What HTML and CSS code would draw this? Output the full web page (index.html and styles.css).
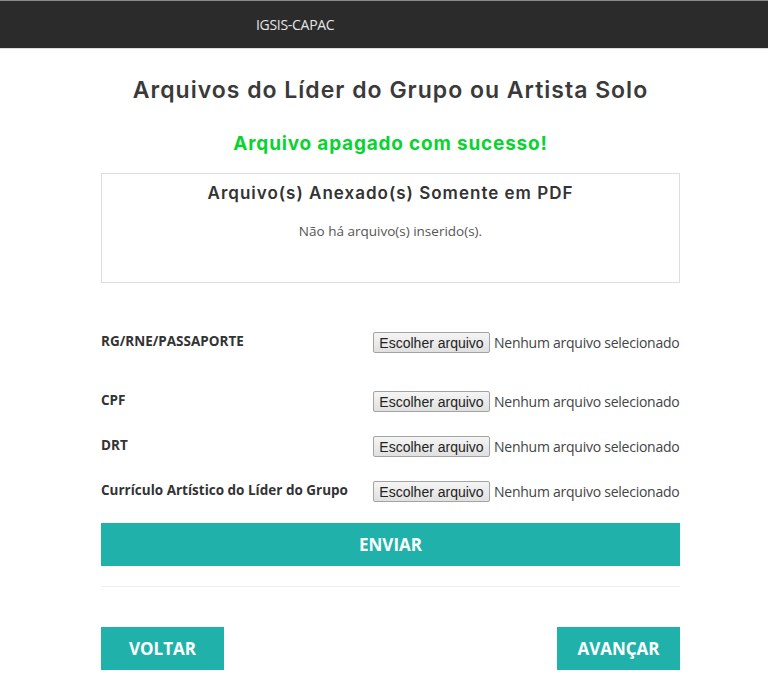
FILE: index.html
```html
<!DOCTYPE html>
<html lang="pt-BR">
<head>
<meta charset="utf-8">
<title>IGSIS-CAPAC</title>
<link rel="stylesheet" href="styles.css">
</head>
<body>
<header class="navbar">
  <span class="brand">IGSIS-CAPAC</span>
</header>
<main class="container">
  <h1 class="title">Arquivos do Líder do Grupo ou Artista Solo</h1>
  <p class="success">Arquivo apagado com sucesso!</p>
  <section class="attached">
    <h2 class="attached-title">Arquivo(s) Anexado(s) Somente em PDF</h2>
    <p class="attached-empty">Não há arquivo(s) inserido(s).</p>
  </section>
  <form class="upload">
    <div class="row row-first">
      <span class="label">RG/RNE/PASSAPORTE</span>
      <div class="file"><label class="file-btn">Escolher arquivo<input type="file" hidden></label><span class="file-name">Nenhum arquivo selecionado</span></div>
    </div>
    <div class="row">
      <span class="label">CPF</span>
      <div class="file"><label class="file-btn">Escolher arquivo<input type="file" hidden></label><span class="file-name">Nenhum arquivo selecionado</span></div>
    </div>
    <div class="row">
      <span class="label">DRT</span>
      <div class="file"><label class="file-btn">Escolher arquivo<input type="file" hidden></label><span class="file-name">Nenhum arquivo selecionado</span></div>
    </div>
    <div class="row">
      <span class="label">Currículo Artístico do Líder do Grupo</span>
      <div class="file"><label class="file-btn">Escolher arquivo<input type="file" hidden></label><span class="file-name">Nenhum arquivo selecionado</span></div>
    </div>
    <button type="button" class="btn btn-block">ENVIAR</button>
  </form>
  <hr class="divider">
  <nav class="pager">
    <button type="button" class="btn btn-nav">VOLTAR</button>
    <button type="button" class="btn btn-nav">AVANÇAR</button>
  </nav>
</main>
</body>
</html>
```

FILE: styles.css
```css
* { box-sizing: border-box; }
html, body { margin: 0; padding: 0; background: #fff; }
body { font-family: "Open Sans", "Liberation Sans", sans-serif; color: #333; }

.navbar {
  height: 49px;
  background: #2b2b2b;
  border-top: 1px solid #8a8a8a;
  border-bottom: 1px solid #dcdcdc;
  padding-left: 256px;
  display: flex;
  align-items: center;
}
.brand { color: #e6e6e6; font-size: 14px; letter-spacing: -0.3px; }

.container { width: 579px; margin: 0 auto 0 101px; }

.title {
  margin: 26px 0 0;
  text-align: center;
  font-family: "Inter", "Noto Sans", sans-serif;
  font-weight: 600;
  font-size: 23px;
  letter-spacing: 1px;
  line-height: 30px;
  color: #3a3a3a;
}
.success {
  margin: 26px 0 0;
  text-align: center;
  font-family: "Inter", "Noto Sans", sans-serif;
  font-weight: 700;
  font-size: 19px;
  letter-spacing: 0.8px;
  line-height: 26px;
  color: #08d42f;
}
.attached {
  margin-top: 16px;
  height: 110px;
  border: 1px solid #dedede;
  text-align: center;
  padding-top: 8px;
}
.attached-title {
  margin: 0;
  font-family: "Inter", "Noto Sans", sans-serif;
  font-weight: 600;
  font-size: 17px;
  letter-spacing: 1px;
  line-height: 22px;
  color: #333;
}
.attached-empty { margin: 18px 0 0; font-size: 13.5px; line-height: 18px; color: #555; }

.upload { margin-top: 49px; }
.row {
  display: grid;
  grid-template-columns: 272px 1fr;
  align-items: start;
  margin-top: 25px;
  height: 20px;
}
.row-first { margin-top: 0; margin-bottom: 39px; }
.upload .row:nth-child(2) { margin-top: 0; }
.label { font-weight: 700; font-size: 13.5px; line-height: 18px; color: #333; }
.file { display: flex; align-items: center; white-space: nowrap; }
.file-btn {
  display: inline-flex;
  align-items: center;
  justify-content: center;
  width: 117px;
  height: 21px;
  border: 1px solid #a3a3a3;
  border-radius: 2px;
  background: linear-gradient(#f5f5f5, #e0e0e0);
  font-family: "Liberation Sans", Arial, sans-serif;
  font-size: 14px;
  color: #222;
}
.file-name { margin-left: 4px; font-size: 14px; color: #444; letter-spacing: -0.25px; }

.btn {
  border: 0;
  background: #20b2aa;
  color: #fff;
  font-family: "Open Sans", "Liberation Sans", sans-serif;
  font-weight: 700;
  font-size: 17px;
  cursor: pointer;
}
.btn-block { display: block; width: 100%; height: 43px; margin-top: 22px; }
.divider { margin: 20px 0 0; border: 0; border-top: 1px solid #eee; }
.pager { display: flex; justify-content: space-between; margin-top: 40px; }
.btn-nav { width: 123px; height: 43px; font-size: 17px; }
```
